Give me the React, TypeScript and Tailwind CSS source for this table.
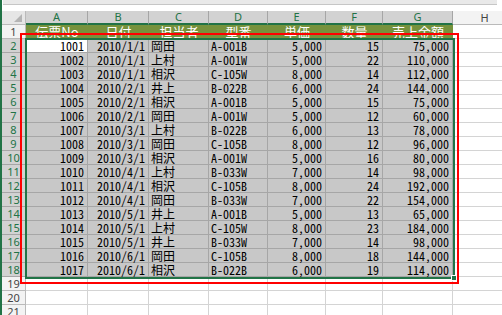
import React from 'react'

const cols = [
  { key: 'A', w: 'w-[62px]' },
  { key: 'B', w: 'w-[61px]' },
  { key: 'C', w: 'w-[60px]' },
  { key: 'D', w: 'w-[59px]' },
  { key: 'E', w: 'w-[58px]' },
  { key: 'F', w: 'w-[57px]' },
  { key: 'G', w: 'w-[70px]' },
  { key: 'H', w: 'w-[64px]' },
]

const headers = ['伝票No', '日付', '担当者', '型番', '単価', '数量', '売上金額']

const rows = [
  ['1001', '2010/1/1', '岡田', 'A-001B', '5,000', '15', '75,000'],
  ['1002', '2010/1/1', '上村', 'A-001W', '5,000', '22', '110,000'],
  ['1003', '2010/1/1', '相沢', 'C-105W', '8,000', '14', '112,000'],
  ['1004', '2010/2/1', '井上', 'B-022B', '6,000', '24', '144,000'],
  ['1005', '2010/2/1', '相沢', 'A-001B', '5,000', '15', '75,000'],
  ['1006', '2010/2/1', '岡田', 'A-001W', '5,000', '12', '60,000'],
  ['1007', '2010/3/1', '上村', 'B-022B', '6,000', '13', '78,000'],
  ['1008', '2010/3/1', '岡田', 'C-105B', '8,000', '12', '96,000'],
  ['1009', '2010/3/1', '相沢', 'A-001W', '5,000', '16', '80,000'],
  ['1010', '2010/4/1', '上村', 'B-033W', '7,000', '14', '98,000'],
  ['1011', '2010/4/1', '相沢', 'C-105B', '8,000', '24', '192,000'],
  ['1012', '2010/4/1', '岡田', 'B-033W', '7,000', '22', '154,000'],
  ['1013', '2010/5/1', '井上', 'A-001B', '5,000', '13', '65,000'],
  ['1014', '2010/5/1', '上村', 'C-105W', '8,000', '23', '184,000'],
  ['1015', '2010/5/1', '井上', 'B-033W', '7,000', '14', '98,000'],
  ['1016', '2010/6/1', '岡田', 'C-105B', '8,000', '18', '144,000'],
  ['1017', '2010/6/1', '相沢', 'B-022B', '6,000', '19', '114,000'],
]

// text columns are left aligned, the rest right aligned
const leftCols = [2, 3]

const cellFont =
  "font-['Noto_Sans_Mono_CJK_JP','DejaVu_Sans_Mono','Noto_Sans_CJK_JP',monospace] text-[12px] leading-[13px]"

export default function App() {
  return (
    <div className="relative h-[315px] w-[502px] overflow-hidden border-l-2 border-[#217346] bg-white">
      {/* top strip (formula bar edge) */}
      <div className="h-[11px] pl-[1px] pr-[5px]">
        <div className="h-[5px] border-b border-[#c6c6c6] bg-[#e9e9e9]" />
      </div>

      {/* column headers */}
      <div className="flex h-[14px]">
        <div className="flex w-[24px] shrink-0 items-end justify-end border-r border-b border-[#bababa] bg-[#e6e6e6] pr-[3px] pb-[2px]">
          <svg width="8" height="8" viewBox="0 0 8 8">
            <polygon points="8,0 8,8 0,8" fill="#b4b4b4" />
          </svg>
        </div>
        {cols.map((c) =>
          c.key === 'H' ? (
            <div
              key={c.key}
              className={`${c.w} shrink-0 border-r border-b border-[#bababa] bg-[#f3f3f3] text-center font-['Noto_Sans',sans-serif] text-[11px] leading-[13px] text-[#444]`}
            >
              {c.key}
            </div>
          ) : (
            <div
              key={c.key}
              className={`${c.w} shrink-0 border-r border-b-2 border-r-[#a6a6a6] border-b-[#217346] bg-[#d2d2d2] text-center font-['Noto_Sans',sans-serif] text-[11px] leading-[12px] text-[#217346]`}
            >
              {c.key}
            </div>
          )
        )}
      </div>

      {/* row 1: table headers */}
      <div className="flex h-[14px]">
        <div className="w-[24px] shrink-0 border-r border-b border-[#bababa] bg-[#f3f3f3] text-center font-['Noto_Sans',sans-serif] text-[11px] leading-[13px] text-[#444]">
          1
        </div>
        {headers.map((h, i) => (
          <div
            key={h}
            className={`${cols[i].w} shrink-0 bg-[#76923c] text-center font-['Noto_Sans_CJK_JP',sans-serif] text-[13px] leading-[14px] text-white`}
          >
            {h}
          </div>
        ))}
        <div className="w-[64px] shrink-0 border-r border-b border-[#d4d4d4]" />
      </div>

      {/* data rows */}
      {rows.map((r, ri) => (
        <div key={r[0]} className="flex h-[14px]">
          <div className="w-[24px] shrink-0 border-r border-b border-[#a6a6a6] bg-[#d2d2d2] text-center font-['Noto_Sans',sans-serif] text-[11px] leading-[13px] text-[#217346]">
            {ri + 2}
          </div>
          {r.map((v, ci) => (
            <div
              key={ci}
              className={`${cols[ci].w} shrink-0 whitespace-nowrap border-r border-b border-[#a6a6a6] ${
                ri === 0 && ci === 0 ? 'bg-white' : 'bg-[#c8c8c8]'
              } ${leftCols.includes(ci) ? 'pl-[2px] text-left' : 'pr-[3px] text-right'} ${cellFont} text-black`}
            >
              {v}
            </div>
          ))}
          <div className="w-[64px] shrink-0 border-r border-b border-[#d4d4d4]" />
        </div>
      ))}

      {/* empty rows */}
      {[19, 20, 21].map((n) => (
        <div key={n} className="flex h-[14px]">
          <div className="w-[24px] shrink-0 border-r border-b border-[#bababa] bg-[#f3f3f3] text-center font-['Noto_Sans',sans-serif] text-[11px] leading-[13px] text-[#444]">
            {n}
          </div>
          {cols.map((c) => (
            <div key={c.key} className={`${c.w} shrink-0 border-r border-b border-[#d4d4d4]`} />
          ))}
        </div>
      ))}

      {/* selection border + fill handle */}
      <div className="pointer-events-none absolute top-[38px] left-[23px] h-[241px] w-[430px] border-2 border-[#217346]">
        <div className="absolute -right-[4px] -bottom-[4px] h-[6px] w-[6px] border border-white bg-[#217346]" />
      </div>

      {/* red annotation frame */}
      <div className="pointer-events-none absolute top-[33px] left-[18px] h-[251px] w-[439px] border-2 border-[#ff0000]" />
    </div>
  )
}
